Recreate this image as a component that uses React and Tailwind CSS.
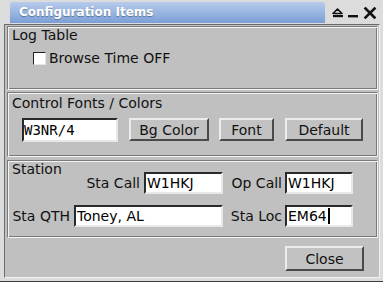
import React from 'react';

const engraved =
  'border border-t-[#7a7a7a] border-l-[#7a7a7a] border-r-[#f4f4f4] border-b-[#f4f4f4] shadow-[inset_1px_1px_0_#f4f4f4,inset_-1px_-1px_0_#7a7a7a]';

const downBox =
  'bg-white border-2 border-t-[#2a2a2a] border-l-[#2a2a2a] border-r-[#e8e8e8] border-b-[#e8e8e8] flex items-center text-[14px] leading-[16px] text-black';

const upBox =
  'bg-[#c2c2c2] border-2 border-t-[#ececec] border-l-[#ececec] border-r-[#4a4a4a] border-b-[#4a4a4a] flex items-center justify-center text-[14px] leading-[16px] text-[#111]';

const Field = ({ w, h = 'h-[22px]', children, className = '' }) => (
  <div className={`${downBox} ${w} ${h} pl-[1px] ${className}`}>{children}</div>
);

const Button = ({ w, h = 'h-[23px]', children }) => (
  <div className={`${upBox} ${w} ${h}`}>{children}</div>
);

const App = () => {
  return (
    <div className="w-[383px] h-[282px] bg-[#dcdcdc] border-b border-[#3c3c3c] flex flex-col font-['DejaVu_Sans',sans-serif] text-[#111] overflow-hidden">
      {/* Title bar */}
      <div className="h-[24px] flex items-start pt-[2px] pl-[10px] shrink-0">
        <div className="w-[315px] h-[21px] rounded-t-[3px] bg-gradient-to-b from-[#b7cbeb] to-[#7c9fd7] pl-[9px] text-white font-bold text-[12px] leading-[21px] [text-shadow:0_1px_1px_rgba(0,0,0,0.35)]">
          Configuration Items
        </div>
        <svg width="58" height="22" viewBox="0 0 58 22" className="shrink-0 -mt-[2px]">
          <polygon points="8,13.5 12.5,9 17,13.5" fill="none" stroke="#111" strokeWidth="1.6" strokeLinejoin="round" />
          <rect x="8" y="15" width="10" height="2.2" fill="#111" />
          <rect x="23" y="15" width="10" height="2.4" fill="#111" />
          <path d="M40.5 8.5 L49.5 17.5 M49.5 8.5 L40.5 17.5" stroke="#111" strokeWidth="2.6" strokeLinecap="square" />
        </svg>
      </div>

      {/* Body */}
      <div className="ml-[4px] mr-[3px] h-[254px] bg-[#c0c0c0] border border-t-[#6c6c6c] border-l-[#6c6c6c] border-r-[#f2f2f2] border-b-[#f2f2f2] pl-[2px] pr-[1px] pt-[1px] flex flex-col">
        {/* Log Table */}
        <div className={`${engraved} h-[64px] pl-[4px] flex flex-col`}>
          <div className="text-[14px] leading-[16px]">Log Table</div>
          <div className="mt-[7px] ml-[21px] flex items-center gap-[3px]">
            <div className="w-[13px] h-[13px] bg-white border border-t-[#222] border-l-[#222] border-r-[#e6e6e6] border-b-[#e6e6e6]" />
            <span className="text-[14px] leading-[16px]">Browse Time OFF</span>
          </div>
        </div>

        {/* Control Fonts / Colors */}
        <div className={`${engraved} mt-[2px] h-[65px] pl-[4px] pt-[2px] flex flex-col`}>
          <div className="text-[14px] leading-[16px]">Control Fonts / Colors</div>
          <div className="mt-[7px] ml-[10px] flex items-start">
            <Field w="w-[96px]" h="h-[24px]" className="!pl-0 font-['DejaVu_Sans_Mono',monospace]">
              W3NR/4
            </Field>
            <div className="ml-[11px]">
              <Button w="w-[80px]">Bg Color</Button>
            </div>
            <div className="ml-[10px]">
              <Button w="w-[55px]">Font</Button>
            </div>
            <div className="ml-[11px]">
              <Button w="w-[78px]">Default</Button>
            </div>
          </div>
        </div>

        {/* Station */}
        <div className={`${engraved} mt-[3px] h-[78px] flex flex-col`}>
          <div className="pl-[4px] text-[14px] leading-[16px]">Station</div>
          <div className="-mt-[5px] flex items-center text-[14px] leading-[16px]">
            <div className="w-[136px] text-right pr-[4px]">Sta Call</div>
            <Field w="w-[79px]">W1HKJ</Field>
            <div className="w-[62px] text-right pr-[3px]">Op Call</div>
            <Field w="w-[68px]">W1HKJ</Field>
          </div>
          <div className="mt-[11px] flex items-center text-[14px] leading-[16px]">
            <div className="w-[66px] text-right pr-[4px]">Sta QTH</div>
            <Field w="w-[149px]">Toney, AL</Field>
            <div className="w-[62px] text-right pr-[3px]">Sta Loc</div>
            <Field w="w-[68px]">
              EM64
              <span className="inline-block w-[2px] h-[16px] bg-black ml-[1px]" />
            </Field>
          </div>
        </div>

        <div className="mt-[8px] flex justify-end pr-[14px]">
          <Button w="w-[79px]" h="h-[25px]">Close</Button>
        </div>
      </div>
    </div>
  );
};

export default App;
